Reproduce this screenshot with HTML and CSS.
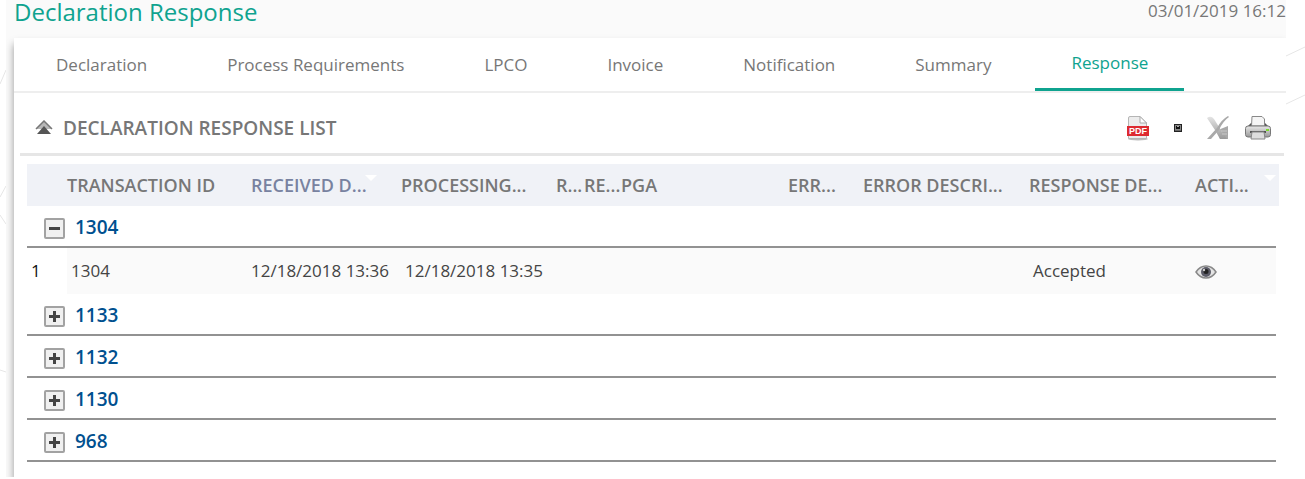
FILE: index.html
```html
<!DOCTYPE html>
<html lang="en">
<head>
  <meta charset="UTF-8">
  <meta name="viewport" content="width=device-width, initial-scale=1.0">
  <title>Declaration Response</title>
  <link rel="stylesheet" href="styles.css">
</head>
<body>
  <svg class="lines lines-left" width="6" height="400" aria-hidden="true">
    <path d="M0 84L6 70M0 197L6 186M0 215L6 224M0 370L6 372"/>
  </svg>
  <svg class="lines lines-right" width="19" height="120" aria-hidden="true">
    <path d="M0 56L19 47M0 104L19 95"/>
  </svg>

  <main class="page">
    <header class="page-header">
      <h1>Declaration Response</h1>
      <time class="page-date">03/01/2019 16:12</time>
    </header>

    <section class="panel">
      <nav class="tabs">
        <a href="#declaration">Declaration</a>
        <a href="#requirements">Process Requirements</a>
        <a href="#lpco">LPCO</a>
        <a href="#invoice">Invoice</a>
        <a href="#notification">Notification</a>
        <a href="#summary">Summary</a>
        <a href="#response" class="active">Response</a>
      </nav>

      <div class="list-header">
        <button type="button" class="icon-btn" aria-label="Collapse list">
          <svg width="18" height="16" viewBox="0 0 18 16">
            <path d="M1 9L9 1L17 9Z" fill="#b8b8b8"/>
            <path d="M1 9L9 1L17 9" fill="none" stroke="#777" stroke-width="1.500"/>
            <path d="M2 14L9 6L16 14Z" fill="#555"/>
          </svg>
        </button>
        <h2>DECLARATION RESPONSE LIST</h2>
        <div class="tools">
          <button type="button" class="icon-btn" aria-label="Export PDF">
            <svg width="24" height="26" viewBox="0 0 24 26">
              <ellipse cx="12" cy="24" rx="10" ry="1.500" fill="#bbb"/>
              <path d="M2.500 3Q2.500 1.500 4 1.500H14L20.500 8V23.500H2.500Z" fill="#ececec" stroke="#b5b5b5"/>
              <path d="M14 1.500V8H20.500Z" fill="#fff" stroke="#aaa"/>
              <rect x="1" y="11" width="22" height="10" fill="#dd2a30"/>
              <text x="12" y="19" class="pdf-text">PDF</text>
            </svg>
          </button>
          <button type="button" class="icon-btn" aria-label="Export CSV">
            <svg width="8" height="8" viewBox="0 0 8 8">
              <rect width="8" height="8" fill="#222"/>
              <rect x="1" y="1" width="6" height="5" fill="#888"/>
              <rect x="2" y="2" width="4" height="3" fill="#111"/>
              <rect x="3" y="2" width="2" height="1" fill="#aaa"/>
              <rect x="1" y="6" width="6" height="1" fill="#666"/>
            </svg>
          </button>
          <button type="button" class="icon-btn" aria-label="Export Excel">
            <svg width="24" height="26" viewBox="0 0 24 26">
              <defs>
                <linearGradient id="x-light" x1="0" y1="0" x2="0" y2="1">
                  <stop offset="0" stop-color="#e4e4e4"/><stop offset="1" stop-color="#999"/>
                </linearGradient>
              </defs>
              <path d="M12 15L22 11V24H14Z" fill="#a8a8a8"/>
              <path d="M1 3Q5 0 8 4L13 12L21 24H14L9 15Z" fill="url(#x-light)"/>
              <path d="M22 1Q15 5 11 13L1 24H5L13 15Q17 6 23 2Z" fill="#a9a9a9"/>
              <path d="M15 16H21M16 19H21" stroke="#c8c8c8"/>
            </svg>
          </button>
          <button type="button" class="icon-btn" aria-label="Print">
            <svg width="28" height="26" viewBox="0 0 28 26">
              <defs>
                <linearGradient id="body" x1="0" y1="0" x2="0" y2="1">
                  <stop offset="0" stop-color="#e8e8e8"/><stop offset="1" stop-color="#999"/>
                </linearGradient>
              </defs>
              <path d="M4 11L7 8H21L24 11Z" fill="#555"/>
              <path d="M8 1.500H18L20.500 4V11H7.500Z" fill="#f5f5f5" stroke="#888"/>
              <rect x="1.500" y="11" width="25" height="11" rx="2.500" fill="url(#body)" stroke="#777"/>
              <path d="M6 17H22" stroke="#555" stroke-width="2"/>
              <path d="M8 17H20L21 24H7Z" fill="#ddd" stroke="#888"/>
              <rect x="22" y="14" width="3" height="2" fill="#7bdc2c"/>
            </svg>
          </button>
        </div>
      </div>

      <div class="table-wrap">
        <table>
          <colgroup>
            <col class="c-num"><col class="c-id"><col class="c-received"><col class="c-processing">
            <col class="c-r"><col class="c-re"><col><col class="c-err">
            <col class="c-desc"><col class="c-desc"><col class="c-act"><col class="c-end">
          </colgroup>
          <thead>
            <tr>
              <td></td>
              <th>TRANSACTION ID</th>
              <th class="sorted">RECEIVED D...<span class="arrow"></span></th>
              <th>PROCESSING...</th>
              <th>R...</th>
              <th>RE...</th>
              <th>PGA</th>
              <th>ERR...</th>
              <th>ERROR DESCRI...</th>
              <th>RESPONSE DE...</th>
              <th colspan="2">ACTI...<span class="arrow"></span></th>
            </tr>
          </thead>
          <tbody>
            <tr class="group">
              <td colspan="11"><div class="group-cell"><button type="button" class="toggle open" aria-label="Collapse 1304"></button><span>1304</span></div></td>
            </tr>
            <tr class="data">
              <td class="num">1</td>
              <td>1304</td>
              <td class="received">12/18/2018 13:36</td>
              <td>12/18/2018 13:35</td>
              <td></td>
              <td></td>
              <td></td>
              <td></td>
              <td></td>
              <td>Accepted</td>
              <td class="action">
                <button type="button" class="icon-btn" aria-label="View response">
                  <svg width="22" height="14" viewBox="0 0 22 14">
                    <path d="M1 7Q5 1 11 1T21 7Q17 13 11 13T1 7Z" fill="#e4e4e4" stroke="#888" stroke-width="1.500"/>
                    <circle cx="11" cy="7" r="5" fill="#5c5c68"/>
                    <circle cx="11" cy="6.500" r="2.500" fill="#222"/>
                    <circle cx="9" cy="5" r="1.200" fill="#ccc"/>
                  </svg>
                </button>
              </td>
            </tr>
            <tr class="group">
              <td colspan="11"><div class="group-cell"><button type="button" class="toggle" aria-label="Expand 1133"></button><span>1133</span></div></td>
            </tr>
            <tr class="group">
              <td colspan="11"><div class="group-cell"><button type="button" class="toggle" aria-label="Expand 1132"></button><span>1132</span></div></td>
            </tr>
            <tr class="group">
              <td colspan="11"><div class="group-cell"><button type="button" class="toggle" aria-label="Expand 1130"></button><span>1130</span></div></td>
            </tr>
            <tr class="group">
              <td colspan="11"><div class="group-cell"><button type="button" class="toggle" aria-label="Expand 968"></button><span>968</span></div></td>
            </tr>
          </tbody>
        </table>
      </div>
    </section>
  </main>
</body>
</html>
```
FILE: styles.css
```css
* {
  box-sizing: border-box;
}
body {
  margin: 0;
  background-color: #fff;
  color: #444;
  font-family: 'Open Sans', 'Noto Sans', sans-serif;
  font-size: 17px;
}
.lines {
  position: absolute;
  top: 0;
  fill: none;
  stroke: #e6e6e6;
}
.lines-left {
  left: 0;
}
.lines-right {
  right: 0;
}
.page {
  margin: 0 19px 0 6px;
  padding-left: 8px;
  background-color: #fafafa;
  overflow: hidden;
}
.page-header {
  display: flex;
  justify-content: space-between;
  height: 38px;
}
h1 {
  margin: 0;
  color: #0fa38f;
  font-size: 24px;
  font-weight: 400;
  line-height: 24px;
}
.page-date {
  color: #777;
  line-height: 22px;
}
.panel {
  background-color: #fff;
  box-shadow: 0 6px 8px rgba(0, 0, 0, 0.4);
  padding-bottom: 15px;
}
.tabs {
  display: flex;
  height: 55px;
  padding-left: 6px;
  border-bottom: 2px solid #eee;
}
.tabs a {
  padding: 0 36px;
  margin-right: 8px;
  color: #777;
  line-height: 54px;
  text-decoration: none;
}
.tabs .active {
  border-bottom: 3px solid #0fa38f;
  color: #0fa38f;
  line-height: 50px;
}
.list-header {
  display: flex;
  align-items: center;
  height: 63px;
  margin: 0 2px 0 6px;
  padding: 10px 12px 0 15px;
  border-bottom: 3px solid #e6e6e6;
}
h2 {
  margin: 0 0 0 10px;
  color: #777;
  font-size: 19px;
  font-weight: 600;
}
.icon-btn {
  padding: 0;
  border: none;
  background: none;
  cursor: pointer;
}
.icon-btn svg {
  display: block;
}
.tools {
  display: flex;
  align-items: center;
  gap: 24px;
  margin-left: auto;
}
.tools .icon-btn:last-child {
  margin-left: -10px;
}
.pdf-text {
  fill: #fff;
  font-size: 9px;
  font-weight: 700;
  text-anchor: middle;
}
.table-wrap {
  padding: 8px 7px 0 13px;
}
table {
  width: 100%;
  border-collapse: separate;
  border-spacing: 0;
  table-layout: fixed;
}
.c-num {
  width: 40px;
}
.c-id {
  width: 184px;
}
.c-received {
  width: 150px;
}
.c-processing {
  width: 155px;
}
.c-r {
  width: 28px;
}
.c-re {
  width: 37px;
}
.c-err {
  width: 75px;
}
.c-desc {
  width: 166px;
}
.c-act {
  width: 81px;
}
.c-end {
  width: 3px;
}
th,
td {
  padding: 0;
  text-align: left;
  white-space: nowrap;
}
thead {
  background-color: #f0f2f7;
}
th {
  position: relative;
  height: 42px;
  color: #777;
  font-size: 18px;
  font-weight: 600;
}
.sorted {
  color: #7882a0;
}
.arrow {
  position: absolute;
  top: 11px;
  right: 3px;
  border: 6px solid transparent;
  border-top-color: #fff;
  border-bottom: none;
}
.sorted .arrow {
  right: 24px;
}
.group td {
  height: 42px;
  border-bottom: 2px solid #929292;
}
.group-cell {
  display: flex;
  align-items: center;
  gap: 10px;
  padding: 2px 0 0 17px;
  color: #00508f;
  font-size: 19px;
  font-weight: 600;
  line-height: 26px;
}
.toggle {
  display: grid;
  place-items: center;
  width: 21px;
  height: 21px;
  margin-top: 3px;
  padding: 0;
  border: 2px solid #a2a2a2;
  border-radius: 2px;
  background-color: #f0f0f0;
}
.toggle::before,
.toggle::after {
  content: '';
  grid-area: 1 / 1;
  width: 11px;
  height: 3px;
  background-color: #444;
}
.toggle::after {
  width: 3px;
  height: 11px;
}
.open::after {
  display: none;
}
.data td {
  height: 46px;
  padding: 0 0 2px 4px;
  background-color: #fafafa;
}
.data .num {
  background-color: #fff;
  color: #111;
}
.data .received {
  padding-left: 0;
}
.data .action {
  padding: 2px 0 0;
}
```
